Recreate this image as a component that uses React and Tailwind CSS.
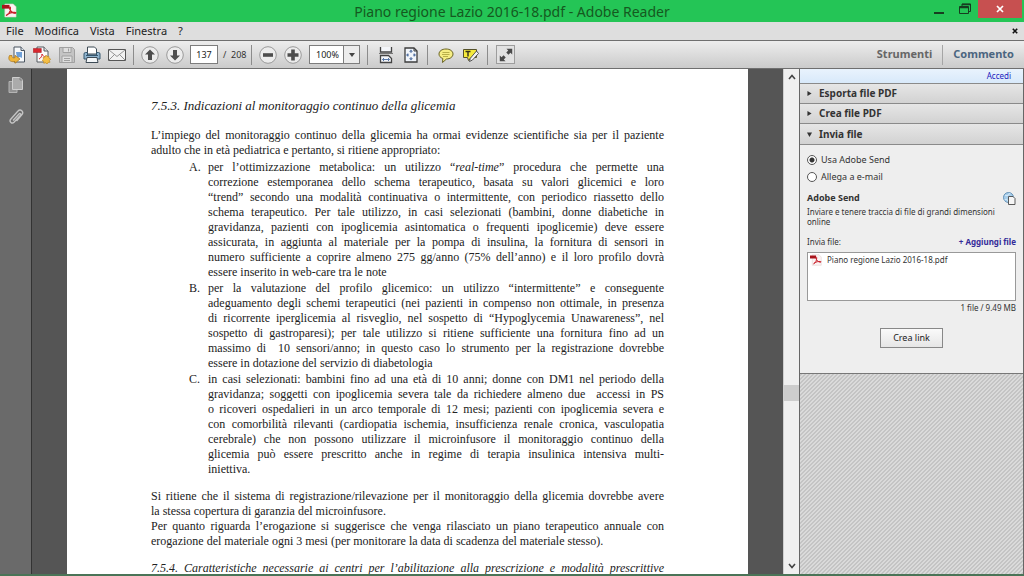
import { useState } from 'react'

const INTRO = [
  'L’impiego del monitoraggio continuo della glicemia ha ormai evidenze scientifiche sia per il paziente',
  'adulto che in età pediatrica e pertanto, si ritiene appropriato:',
]

const PUNTI = [
  {
    lettera: 'A.',
    righe: [
      <>per l’ottimizzazione metabolica: un utilizzo “<i>real-time</i>” procedura che permette una</>,
      'correzione estemporanea dello schema terapeutico, basata su valori glicemici e loro',
      '“trend” secondo una modalità continuativa o intermittente, con periodico riassetto dello',
      'schema terapeutico. Per tale utilizzo, in casi selezionati (bambini, donne diabetiche in',
      'gravidanza, pazienti con ipoglicemia asintomatica o frequenti ipoglicemie) deve essere',
      'assicurata, in aggiunta al materiale per la pompa di insulina, la fornitura di sensori in',
      'numero sufficiente a coprire almeno 275 gg/anno (75% dell’anno) e il loro profilo dovrà',
      'essere inserito in web-care tra le note',
    ],
  },
  {
    lettera: 'B.',
    righe: [
      'per la valutazione del profilo glicemico: un utilizzo “intermittente” e conseguente',
      'adeguamento degli schemi terapeutici (nei pazienti in compenso non ottimale, in presenza',
      'di ricorrente iperglicemia al risveglio, nel sospetto di “Hypoglycemia Unawareness”, nel',
      'sospetto di gastroparesi); per tale utilizzo si ritiene sufficiente una fornitura fino ad un',
      'massimo di \u00a010 sensori/anno; in questo caso lo strumento per la registrazione dovrebbe',
      'essere in dotazione del servizio di diabetologia',
    ],
  },
  {
    lettera: 'C.',
    righe: [
      'in casi selezionati: bambini fino ad una età di 10 anni; donne con DM1 nel periodo della',
      'gravidanza; soggetti con ipoglicemia severa tale da richiedere almeno due \u00a0accessi in PS',
      'o ricoveri ospedalieri in un arco temporale di 12 mesi; pazienti con ipoglicemia severa e',
      'con comorbilità rilevanti (cardiopatia ischemia, insufficienza renale cronica, vasculopatia',
      'cerebrale) che non possono utilizzare il microinfusore il monitoraggio continuo della',
      'glicemia può essere prescritto anche in regime di terapia insulinica intensiva multi-',
      'iniettiva.',
    ],
  },
]

const GARANZIA = [
  'Si ritiene che il sistema di registrazione/rilevazione per il monitoraggio della glicemia dovrebbe avere',
  'la stessa copertura di garanzia del microinfusore.',
]

const EROGAZIONE = [
  'Per quanto riguarda l’erogazione si suggerisce che venga rilasciato un piano terapeutico annuale con',
  'erogazione del materiale ogni 3 mesi (per monitorare la data di scadenza del materiale stesso).',
]

// Every line but the last one is spread to the full measure
const Righe = ({ righe }) => (
  <>
    {righe.map((r, i) => (
      <span
        key={i}
        className={`block whitespace-nowrap ${i < righe.length - 1 ? 'text-justify [text-align-last:justify]' : ''}`}
      >
        {r}
      </span>
    ))}
  </>
)

const PdfIcon = ({ className }) => (
  <svg viewBox="0 0 16 16" className={className} aria-hidden="true">
    <path d="M3 1h9l3 3v11H3z" fill="#fbf3f3" stroke="#d9c4c4" strokeWidth=".6" />
    <path d="M0 2h8v4H0z" fill="#a8141c" />
    <path d="M5 13c2-1 4-4 4-8 0-1-1-1-1 0 0 3 3 6 6 6 1 0 1-1 0-1-3-.4-6 .6-8 2-1 .8-1.600 1.500-1 1z" fill="none" stroke="#c8202a" strokeWidth="1.300" />
  </svg>
)

const OpenIcon = () => (
  <svg viewBox="0 0 18 18" className="size-[18px]" aria-hidden="true">
    <path d="M6 1h7l3.500 3.500V16H6z" fill="#f7f9fb" stroke="#4b5560" />
    <path d="M13 1v3.500h3.500" fill="#dfe6ec" stroke="#4b5560" />
    <path d="M8 6h6v6l-2-1-3 1z" fill="#6fa0d8" />
    <path d="M1.500 9.500c-2 4 .5 7 5.500 6v1.800l5-4.300-5-3.700v2.400c-2.300.6-3.300-.2-3-2.200z" fill="#f0b53a" stroke="#a8741a" strokeWidth=".7" />
  </svg>
)

const CreateIcon = () => (
  <svg viewBox="0 0 18 18" className="size-[18px]" aria-hidden="true">
    <path d="M4 1h7l4 4v11H4z" fill="#fafafa" stroke="#555b61" />
    <path d="M11 1v4h4" fill="#e3e3e3" stroke="#555b61" />
    <path d="M.3 2.500h8v4h-8z" fill="#d6272f" stroke="#a3161c" strokeWidth=".5" />
    <path d="M6 13c2-1 3-3 3-5 1 2 2 3 4 3" fill="none" stroke="#d6272f" />
    <path d="M13 9l1 1.600 1.900-.3.100 1.900 1.700.9-1.300 1.400.6 1.800-1.900.1-1 1.600-1.500-1.200-1.800.5-.1-1.900-1.500-1 1.300-1.300-.5-1.800 1.900-.1z" fill="#f5bf45" stroke="#b9831c" strokeWidth=".6" />
  </svg>
)

const SaveIcon = () => (
  <svg viewBox="0 0 18 18" className="size-[18px]" aria-hidden="true">
    <path d="M1.500 1.500h13l2 2v13h-15z" fill="#c4c4c4" stroke="#a0a0a0" />
    <path d="M5 1.500h8v5H5zM4 10h10v6.500H4z" fill="#dedede" stroke="#a0a0a0" />
    <path d="M10.500 2.500v3M6 12.500h6M6 14.500h6" stroke="#a0a0a0" />
  </svg>
)

const PrintIcon = () => (
  <svg viewBox="0 0 18 18" className="size-[18px]" aria-hidden="true">
    <path d="M4.500 1h7l2 2v5h-9z" fill="#fff" stroke="#3d4a55" />
    <path d="M1 8q0-1.500 1.500-1.500h2V9h9V6.500h2Q17 6.500 17 8v5H1z" fill="#8fb4cf" stroke="#35566e" />
    <path d="M3 9.500h12" stroke="#35566e" />
    <path d="M4 11.500h10l1 5H3z" fill="#f3f6f8" stroke="#3d4a55" />
  </svg>
)

const MailIcon = () => (
  <svg viewBox="0 0 20 18" className="h-[18px] w-5" aria-hidden="true">
    <path d="M1.500 3.500h17v11h-17z" fill="#f2f2f2" stroke="#565656" />
    <path d="M2 4l8 6.500L18 4M2 14l5.500-5.500M18 14l-5.500-5.500" fill="none" stroke="#8a8a8a" strokeWidth=".9" />
  </svg>
)

const RoundIcon = ({ d }) => (
  <svg viewBox="0 0 18 18" className="size-[18px]" aria-hidden="true">
    <circle cx="9" cy="9" r="8.300" fill="#ececec" stroke="#9a9a9a" />
    <path d={d} fill="#4d4d4d" />
  </svg>
)

const FitWidthIcon = () => (
  <svg viewBox="0 0 18 18" className="size-[18px]" aria-hidden="true">
    <path d="M3.500 1v5h11V1" fill="#f4f6fa" stroke="#444" strokeWidth="1.300" />
    <path d="M2 7.500h14" stroke="#777" />
    <path d="M3.500 16.500V9.500h8l3 3v4z" fill="#f4f6fa" stroke="#444" strokeWidth="1.300" />
    <path d="M5.500 13.500h7M7 12l-1.500 1.500L7 15M11 12l1.500 1.500L11 15" fill="none" stroke="#5878a8" />
  </svg>
)

const FitPageIcon = () => (
  <svg viewBox="0 0 18 18" className="size-[18px]" aria-hidden="true">
    <path d="M3 2h9l3 3v11H3z" fill="#f1f5fb" stroke="#3d3d3d" strokeWidth="1.300" />
    <path d="M12 2v3h3" fill="none" stroke="#3d3d3d" />
    <path d="M9 3.500l2 2.200H7zM9 14.500l2-2.200H7zM4 9l2.200-2v4zM14 9l-2.200-2v4z" fill="#5573a3" />
    <path d="M9 5v2M9 11v2M5.500 9H7M11 9h1.500" stroke="#5573a3" />
  </svg>
)

const NoteIcon = () => (
  <svg viewBox="0 0 18 18" className="size-[18px]" aria-hidden="true">
    <path d="M9 3c4.200 0 7 2.200 7 5s-2.800 5-6.500 5L5.500 16.500l.3-4C3.300 11.600 2 10 2 8c0-2.800 2.800-5 7-5z" fill="#f6ee84" stroke="#6b6526" />
    <path d="M5.500 6.500h7M5 8.500h7.500M6 10.500h5" stroke="#a9a03a" strokeWidth=".8" />
  </svg>
)

const HighlightIcon = () => (
  <svg viewBox="0 0 18 18" className="size-[18px]" aria-hidden="true">
    <path d="M1.500 3.500h13v8H9l-2.500 3-1-3h-4z" fill="#f5ea3c" stroke="#55512a" />
    <path d="M3.500 5.500h5M6 5.500v5" stroke="#33301a" strokeWidth="1.400" />
    <path d="M14.500 5l2 2.500-6 6.500-3 1.500.8-3.200z" fill="#f3f3f3" stroke="#444" strokeWidth=".9" />
  </svg>
)

const ExpandIcon = () => (
  <svg viewBox="0 0 18 18" className="size-4 shrink-0" aria-hidden="true">
    <path d="M9.500 2h6.500v6.500L14 6.500l-2.300 2.200-2.400-2.400L11.500 4zM8.500 16H2V9.500l2 2 2.300-2.200 2.400 2.400L6.500 14z" fill="#4a4a4a" />
  </svg>
)

const PagesIcon = () => (
  <svg viewBox="0 0 16 18" className="h-[18px] w-4" aria-hidden="true">
    <path d="M1 5.500h8v11H1z" fill="#929292" stroke="#b4b4b4" />
    <path d="M4.500 1.500h7.500l2.500 2.500v9.500h-10z" fill="#ababab" stroke="#cecece" />
    <path d="M12 1.500V4h2.500" fill="none" stroke="#777" strokeWidth=".8" />
  </svg>
)

const ClipIcon = () => (
  <svg viewBox="0 0 16 18" className="h-[18px] w-4" aria-hidden="true">
    <path d="M5 12.500l6-6.500c1-1.200 2.400.1 1.500 1.200L6 14.300c-2 2-5.200-.6-3.300-3L9.800 3.200c2.800-2.800 6.500.6 4 3.600L8.500 13" fill="none" stroke="#c4c4c4" strokeWidth="1.400" />
  </svg>
)

const GlobeIcon = () => (
  <svg viewBox="0 0 13 13" className="size-[13px]" aria-hidden="true">
    <circle cx="5.500" cy="5.500" r="5" fill="#a7cdea" stroke="#4b7fa8" strokeWidth=".8" />
    <path d="M2 3c2 1.500 4 0 5-2M1.500 8c2-1 3-1 4 2" fill="none" stroke="#e3f2fb" />
    <path d="M5.500 4.500h4.500l2 2v6H5.500z" fill="#f6f6f6" stroke="#4a4a4a" strokeWidth=".9" />
  </svg>
)

const Separatore = () => (
  <div className="flex w-2 shrink-0 justify-center">
    <div className="h-5 w-px bg-[#8c8c8c]" />
  </div>
)

const ToolButton = ({ label, children }) => (
  <button type="button" aria-label={label} className="flex h-6 w-[25px] shrink-0 items-center justify-center">
    {children}
  </button>
)

const TitleBar = () => (
  <header className="grid h-[22px] shrink-0 grid-cols-[1fr_auto_1fr] bg-[#24c556]">
    <PdfIcon className="mt-[3px] ml-0.5 size-[15px]" />
    <h1 className="text-[14px] leading-[23px] text-[#15591f]">Piano regione Lazio 2016-18.pdf - Adobe Reader</h1>
    <div className="flex justify-end pr-0.5">
      <button type="button" aria-label="Riduci a icona" className="flex w-[26px] justify-center pt-3">
        <span className="h-0.5 w-2.5 bg-[#173d20]" />
      </button>
      <button type="button" aria-label="Ripristina" className="flex w-[26px] justify-center pt-[3px]">
        <svg viewBox="0 0 12 12" className="size-3" aria-hidden="true">
          <path d="M3 3V1h8.500v7.500H9.500M.5 3.500h9v7h-9z" fill="none" stroke="#173d20" />
          <path d="M.5 4.500h9M3 1.500h8.500" stroke="#173d20" strokeWidth="1.500" />
        </svg>
      </button>
      <button type="button" aria-label="Chiudi" className="flex h-[18px] w-11 items-center justify-center bg-[#c75050]">
        <svg viewBox="0 0 8 8" className="size-2" aria-hidden="true">
          <path d="M1 1l6 6M7 1L1 7" stroke="#fff" strokeWidth="1.700" />
        </svg>
      </button>
    </div>
  </header>
)

const MenuBar = () => (
  <nav className="flex h-[18px] shrink-0 items-center gap-[11px] bg-[#dedede] px-1.5 text-[11px] text-[#222]">
    {['File', 'Modifica', 'Vista', 'Finestra', '?'].map((m) => (
      <button key={m} type="button">{m}</button>
    ))}
    <button type="button" aria-label="Chiudi documento" className="ml-auto">
      <svg viewBox="0 0 6 6" className="size-1.5" aria-hidden="true">
        <path d="M.8.8l4.400 4.400M5.200.8L.8 5.200" stroke="#111" strokeWidth="1.600" />
      </svg>
    </button>
  </nav>
)

const Toolbar = () => {
  const [pagina, setPagina] = useState('137')

  return (
    <div className="flex h-[29px] shrink-0 items-center border-y border-[#6f6f6f] bg-linear-to-b from-[#ededed] to-[#cbcbcb] pl-1">
      <ToolButton label="Apri"><OpenIcon /></ToolButton>
      <ToolButton label="Crea PDF"><CreateIcon /></ToolButton>
      <ToolButton label="Salva"><SaveIcon /></ToolButton>
      <ToolButton label="Stampa"><PrintIcon /></ToolButton>
      <ToolButton label="Invia per e-mail"><MailIcon /></ToolButton>
      <Separatore />
      <ToolButton label="Pagina precedente"><RoundIcon d="M9 3.500l5 5h-3V14H7V8.500H4z" /></ToolButton>
      <ToolButton label="Pagina successiva"><RoundIcon d="M9 14.500l5-5h-3V4H7v5.500H4z" /></ToolButton>
      <input
        aria-label="Pagina"
        value={pagina}
        onChange={(e) => setPagina(e.target.value)}
        className="ml-[3px] h-[19px] w-7 border border-[#7d7d7d] bg-white text-center text-[9px] text-[#222]"
      />
      <span className="w-[29px] shrink-0 pl-[5px] text-[9px] whitespace-pre text-[#333]">/  208</span>
      <Separatore />
      <ToolButton label="Riduci"><RoundIcon d="M4 7.200h10v3.600H4z" /></ToolButton>
      <ToolButton label="Ingrandisci"><RoundIcon d="M7.200 3.500h3.600v3.700h3.700v3.600h-3.700v3.700H7.200v-3.700H3.500V7.200h3.700z" /></ToolButton>
      <div className="relative ml-1 h-[19px] w-[51px] shrink-0">
        <select
          aria-label="Zoom"
          defaultValue="100%"
          className="block h-[19px] w-full appearance-none border border-[#7d7d7d] bg-white pl-1.5 text-[9px] text-[#222]"
        >
          <option>75%</option>
          <option>100%</option>
          <option>125%</option>
        </select>
        <span className="pointer-events-none absolute inset-y-px right-px flex w-4 items-center justify-center border-l border-[#7d7d7d] bg-[#ececec]">
          <svg viewBox="0 0 6 4" className="h-1 w-1.5" aria-hidden="true"><path d="M0 0h6L3 4z" fill="#444" /></svg>
        </span>
      </div>
      <div className="w-[3px]" />
      <Separatore />
      <div className="w-0.5" />
      <ToolButton label="Adatta alla larghezza"><FitWidthIcon /></ToolButton>
      <ToolButton label="Adatta alla pagina"><FitPageIcon /></ToolButton>
      <Separatore />
      <div className="w-0.5" />
      <ToolButton label="Aggiungi nota"><NoteIcon /></ToolButton>
      <ToolButton label="Evidenzia testo"><HighlightIcon /></ToolButton>
      <Separatore />
      <button type="button" aria-label="Modalità lettura" className="ml-[5px] flex size-[19px] items-center justify-center border border-[#9d9d9d] bg-[#e2e2e2]">
        <ExpandIcon />
      </button>
      <div className="ml-auto flex items-center text-[11px] font-bold">
        <button type="button" className="px-2.5 text-[#666]">Strumenti</button>
        <div className="h-5 w-px bg-[#a5a5a5]" />
        <button type="button" className="px-2.5 text-[#4b6580]">Commento</button>
      </div>
    </div>
  )
}

const Documento = () => (
  <main className="min-w-0 flex-1 overflow-hidden bg-[#555] px-[35px]">
    <article className="bg-white px-[84px] pt-[29px] font-['Liberation_Serif',serif] text-[12px] leading-[15px] text-[#222]">
      <h2 className="text-[13px] leading-[15px] italic">7.5.3. Indicazioni al monitoraggio continuo della glicemia</h2>
      <p className="mt-[15px]"><Righe righe={INTRO} /></p>
      <ol className="mt-0.5 space-y-px">
        {PUNTI.map((p) => (
          <li key={p.lettera} className="flex">
            <span className="w-[57px] shrink-0 pl-[38px]">{p.lettera}</span>
            <p className="min-w-0 flex-1"><Righe righe={p.righe} /></p>
          </li>
        ))}
      </ol>
      <p className="mt-3"><Righe righe={GARANZIA} /></p>
      <p><Righe righe={EROGAZIONE} /></p>
      <h2 className="mt-3 text-justify whitespace-nowrap italic [text-align-last:justify]">
        7.5.4. Caratteristiche necessarie ai centri per l’abilitazione alla prescrizione e modalità prescrittive
      </h2>
    </article>
  </main>
)

const Freccia = ({ d }) => (
  <svg viewBox="0 0 8 6" className="h-1.5 w-2" aria-hidden="true">
    <path d={d} fill="none" stroke="#444" strokeWidth="1.600" />
  </svg>
)

const ScrollBar = () => (
  <div className="flex w-4 shrink-0 flex-col items-center border-l border-[#d0d0d0] bg-[#f0f0f0]">
    <button type="button" aria-label="Scorri su" className="flex h-4 items-center"><Freccia d="M1 5l3-3.500L7 5" /></button>
    <div className="flex w-full flex-1 flex-col">
      <div className="grow-[301]" />
      <div className="h-4 w-full bg-[#cdcdcd]" />
      <div className="grow-[158]" />
    </div>
    <button type="button" aria-label="Scorri giù" className="flex h-4 items-center"><Freccia d="M1 1l3 3.500L7 1" /></button>
  </div>
)

const Sezione = ({ titolo, aperta }) => (
  <button
    type="button"
    aria-expanded={!!aperta}
    className={`flex w-full shrink-0 items-center gap-[7px] border-b border-[#8a8a8a] bg-linear-to-b from-[#e6e6e6] to-[#d2d2d2] pl-[7px] text-[10px] font-bold text-[#333] ${aperta ? 'h-[21px]' : 'h-5'}`}
  >
    <svg viewBox="0 0 6 6" className="size-[5px]" aria-hidden="true">
      <path d={aperta ? 'M0 .5h6L3 6z' : 'M.5 0v6L5.500 3z'} fill="#333" />
    </svg>
    {titolo}
  </button>
)

const Opzione = ({ label, ...props }) => (
  <label className="flex h-[17px] items-center gap-1 text-[9px]">
    <input
      type="radio"
      name="metodo"
      className="size-[10px] appearance-none rounded-full border border-[#555] bg-white checked:bg-[radial-gradient(circle,#333_2px,#fff_3px)]"
      {...props}
    />
    {label}
  </label>
)

const Pannello = () => (
  <aside className="flex w-[225px] shrink-0 flex-col border-x border-[#666] bg-[#eee] text-[8px] text-[#333]">
    <div className="h-[15px] shrink-0 border-b border-[#8a8a8a] bg-linear-to-b from-[#e9f3fd] to-[#d8e9fa] pr-3 text-right leading-[14px]">
      <a href="#accedi" className="text-[#1a1ac0]">Accedi</a>
    </div>
    <Sezione titolo="Esporta file PDF" />
    <Sezione titolo="Crea file PDF" />
    <Sezione titolo="Invia file" aperta />
    <form className="h-[229px] shrink-0 border-b border-[#777] px-[7px] pt-1.5" onSubmit={(e) => e.preventDefault()}>
      <Opzione label="Usa Adobe Send" value="send" defaultChecked />
      <Opzione label="Allega a e-mail" value="mail" />
      <div className="mt-1.5 flex h-[14px] items-center justify-between">
        <h3 className="text-[9px] font-bold">Adobe Send</h3>
        <GlobeIcon />
      </div>
      <p className="mt-0.5 leading-[10px]">Inviare e tenere traccia di file di grandi dimensioni online</p>
      <div className="mt-2 flex h-[14px] items-center justify-between">
        <span>Invia file:</span>
        <button type="button" className="font-bold text-[#332a99]">+ Aggiungi file</button>
      </div>
      <ul className="mt-[3px] h-[49px] border border-[#999] bg-white px-0.5 pt-px">
        <li className="flex items-center gap-[5px] leading-3">
          <PdfIcon className="size-3" />
          Piano regione Lazio 2016-18.pdf
        </li>
      </ul>
      <p className="text-right leading-[14px]">1 file / 9.49 MB</p>
      <button type="submit" className="mx-auto mt-[13px] block h-5 w-[63px] border border-[#888] bg-linear-to-b from-[#fafafa] to-[#e6e6e6] text-[9px] text-[#222]">
        Crea link
      </button>
    </form>
    <div className="flex-1 bg-[linear-gradient(135deg,#c4c4c4_25%,#dadada_25%,#dadada_50%,#c4c4c4_50%,#c4c4c4_75%,#dadada_75%)] bg-size-[4px_4px]" />
  </aside>
)

export default function App() {
  return (
    <div className="flex h-screen flex-col overflow-hidden border-b-2 border-[#4a7457] font-['Noto_Sans',sans-serif]">
      <TitleBar />
      <MenuBar />
      <Toolbar />
      <div className="flex min-h-0 flex-1">
        <nav className="flex w-8 shrink-0 flex-col items-center gap-[14px] border-r border-[#333] bg-[#6a6a6a] pt-[7px]">
          <button type="button" aria-label="Miniature pagine"><PagesIcon /></button>
          <button type="button" aria-label="Allegati"><ClipIcon /></button>
        </nav>
        <Documento />
        <ScrollBar />
        <Pannello />
      </div>
    </div>
  )
}
